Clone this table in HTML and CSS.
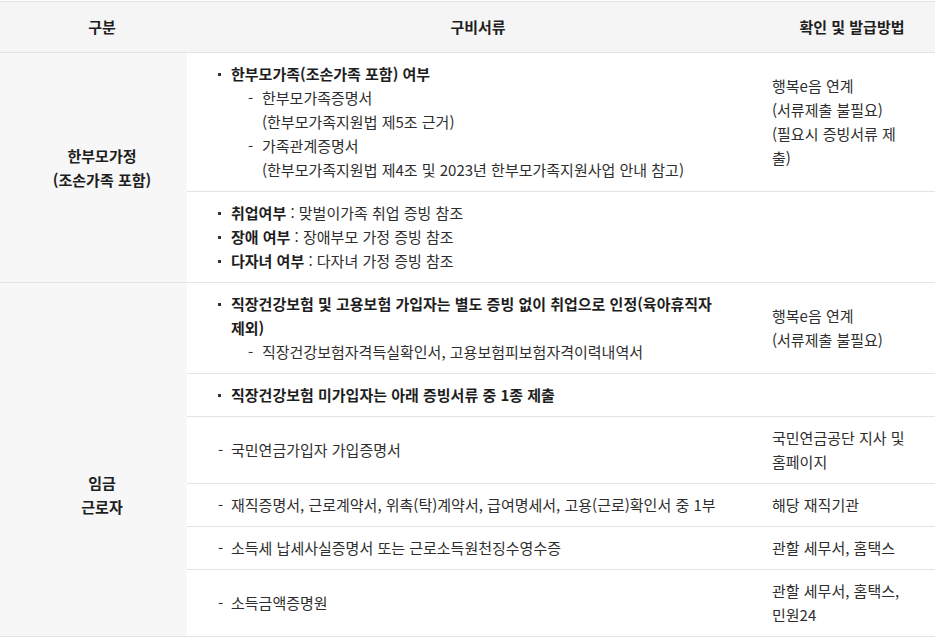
FILE: index.html
```html
<!DOCTYPE html>
<html lang="ko">
<head>
<meta charset="utf-8">
<title>구비서류</title>
<link rel="stylesheet" href="styles.css">
</head>
<body>
<table class="doc-table">
  <colgroup>
    <col class="c1">
    <col class="c2">
    <col class="c3">
  </colgroup>
  <thead>
    <tr>
      <th>구분</th>
      <th>구비서류</th>
      <th>확인 및 발급방법</th>
    </tr>
  </thead>
  <tbody>
    <tr>
      <td class="cat" rowspan="2">한부모가정<br>(조손가족 포함)</td>
      <td class="docs">
        <div class="item b"><span class="mark"><i class="sq"></i></span><span>한부모가족(조손가족 포함) 여부</span></div>
        <div class="item sub"><span class="mark">-</span><span>한부모가족증명서<br>(한부모가족지원법 제5조 근거)</span></div>
        <div class="item sub"><span class="mark">-</span><span>가족관계증명서<br>(한부모가족지원법 제4조 및 2023년 한부모가족지원사업 안내 참고)</span></div>
      </td>
      <td class="how">행복e음 연계<br>(서류제출 불필요)<br>(필요시 증빙서류 제<br>출)</td>
    </tr>
    <tr>
      <td class="docs" colspan="2">
        <div class="item"><span class="mark"><i class="sq"></i></span><span><b>취업여부</b> : 맞벌이가족 취업 증빙 참조</span></div>
        <div class="item"><span class="mark"><i class="sq"></i></span><span><b>장애 여부</b> : 장애부모 가정 증빙 참조</span></div>
        <div class="item"><span class="mark"><i class="sq"></i></span><span><b>다자녀 여부</b> : 다자녀 가정 증빙 참조</span></div>
      </td>
    </tr>
    <tr class="group">
      <td class="cat cat-low" rowspan="6">임금<br>근로자</td>
      <td class="docs">
        <div class="item b"><span class="mark"><i class="sq"></i></span><span>직장건강보험 및 고용보험 가입자는 별도 증빙 없이 취업으로 인정(육아휴직자<br>제외)</span></div>
        <div class="item sub"><span class="mark">-</span><span>직장건강보험자격득실확인서, 고용보험피보험자격이력내역서</span></div>
      </td>
      <td class="how">행복e음 연계<br>(서류제출 불필요)</td>
    </tr>
    <tr>
      <td class="docs" colspan="2">
        <div class="item b"><span class="mark"><i class="sq"></i></span><span>직장건강보험 미가입자는 아래 증빙서류 중 1종 제출</span></div>
      </td>
    </tr>
    <tr>
      <td class="docs"><div class="item"><span class="mark">-</span><span>국민연금가입자 가입증명서</span></div></td>
      <td class="how">국민연금공단 지사 및<br>홈페이지</td>
    </tr>
    <tr>
      <td class="docs"><div class="item"><span class="mark">-</span><span>재직증명서, 근로계약서, 위촉(탁)계약서, 급여명세서, 고용(근로)확인서 중 1부</span></div></td>
      <td class="how">해당 재직기관</td>
    </tr>
    <tr>
      <td class="docs"><div class="item"><span class="mark">-</span><span>소득세 납세사실증명서 또는 근로소득원천징수영수증</span></div></td>
      <td class="how">관할 세무서, 홈택스</td>
    </tr>
    <tr>
      <td class="docs"><div class="item"><span class="mark">-</span><span>소득금액증명원</span></div></td>
      <td class="how">관할 세무서, 홈택스,<br>민원24</td>
    </tr>
  </tbody>
</table>
</body>
</html>
```

FILE: styles.css
```css
html, body {
  margin: 0;
  padding: 0;
  background: #fff;
}

body {
  font-family: "Noto Sans CJK KR", "Noto Sans", sans-serif;
  font-size: 15px;
  line-height: 24px;
  color: #2e2e2e;
}

.doc-table {
  width: 935px;
  margin-top: 1px;
  border-collapse: collapse;
  table-layout: fixed;
  border-top: 1px solid #e3e3e3;
}

.c1 { width: 187px; }
.c2 { width: 565px; }
.c3 { width: 183px; }

.doc-table th {
  background: #f5f5f5;
  font-weight: 700;
  color: #1e1e1e;
  height: 50px;
  padding: 0 0 0 17px;
  text-align: center;
  vertical-align: middle;
  border-bottom: 1px solid #e3e3e3;
}

.doc-table td {
  padding: 9px 0;
  vertical-align: middle;
  border-bottom: 1px solid #e3e3e3;
}

.doc-table td.cat {
  background: #f7f7f7;
  text-align: center;
  font-weight: 700;
  color: #1e1e1e;
  padding-left: 17px;
}

.doc-table td.cat-low {
  padding-top: 79px;
}

.doc-table td.docs {
  padding-left: 31px;
}

.doc-table td.how {
  padding-left: 20px;
}

.item {
  display: flex;
  align-items: flex-start;
}

.item .mark {
  flex: none;
  width: 13px;
  display: flex;
  align-items: center;
  height: 24px;
}

.item.sub {
  margin-left: 30px;
}

.item.sub .mark {
  width: 14px;
}

.item.b,
.item b {
  font-weight: 700;
  color: #1e1e1e;
}

.sq {
  display: block;
  width: 3px;
  height: 3px;
  background: #333;
}
```
